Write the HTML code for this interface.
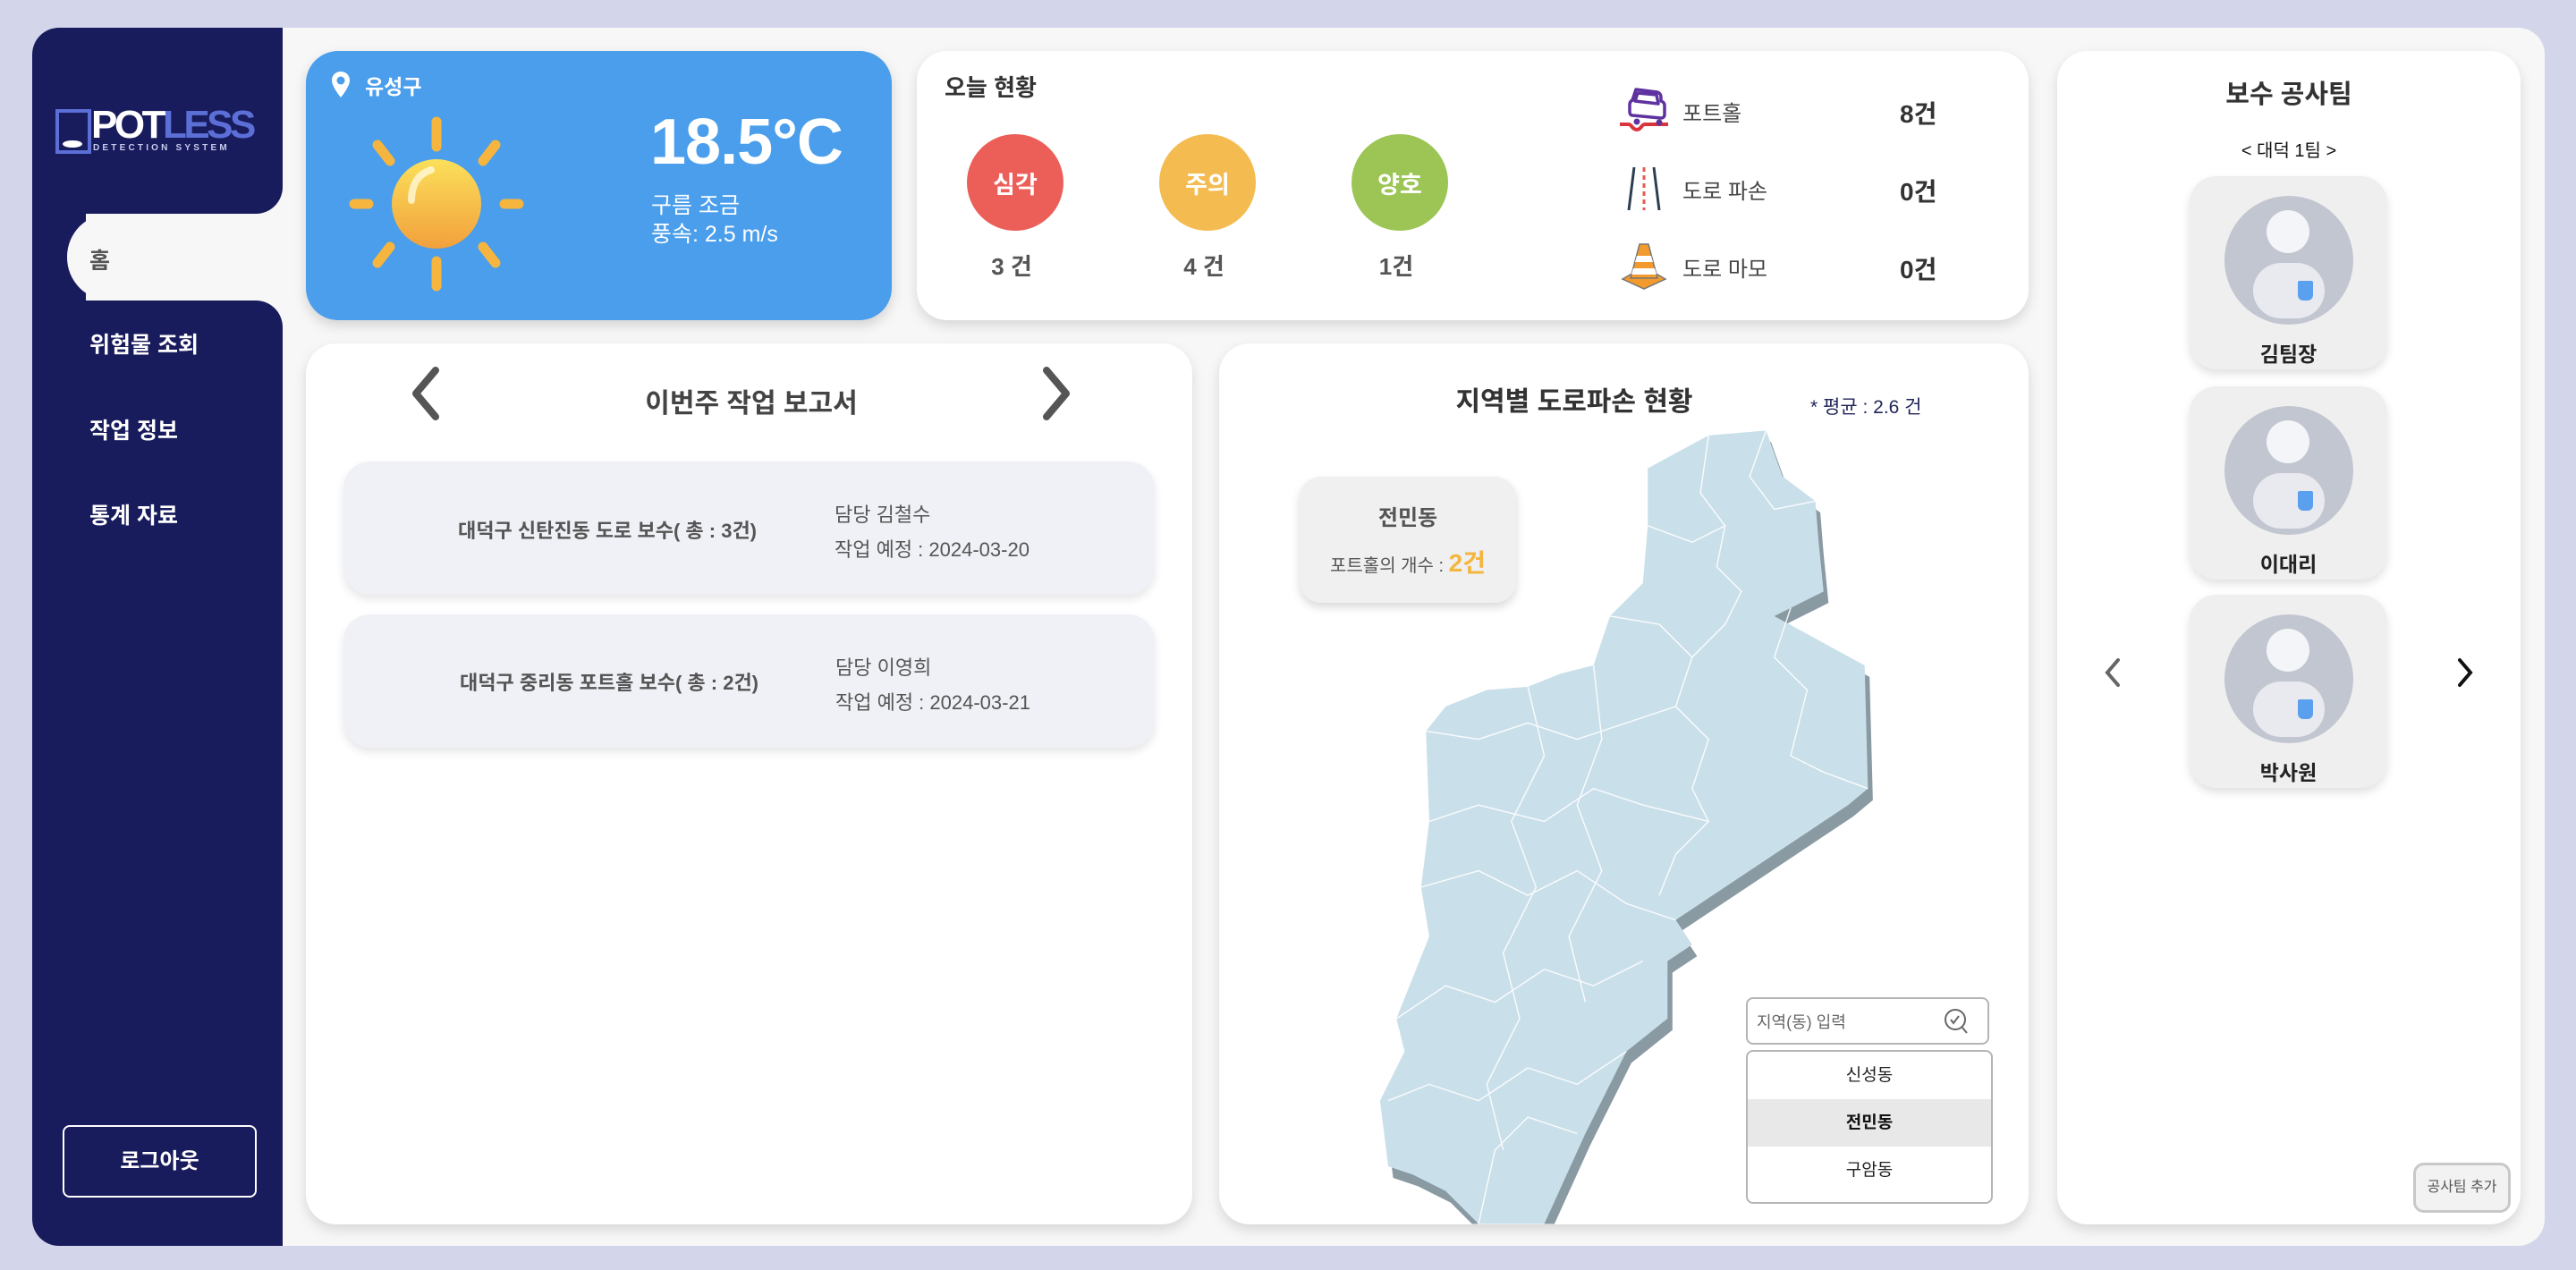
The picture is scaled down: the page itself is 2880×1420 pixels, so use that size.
<!DOCTYPE html>
<html><head><meta charset="utf-8"><style>
*{margin:0;padding:0;box-sizing:border-box}
body{width:2880px;height:1420px;background:#d3d5ea;font-family:"Liberation Sans","Noto Sans CJK KR",sans-serif;position:relative;overflow:hidden;color:#444}
.a{position:absolute}
.frame{left:36px;top:31px;width:2809px;height:1362px;background:#f7f7f7;border-radius:30px;overflow:hidden}
.nav{background:#181b5c}
.card{background:#fff;border-radius:34px;box-shadow:0 6px 14px rgba(0,0,0,.13)}
.nt{color:#fff;font-weight:bold;font-size:25px;left:100px}
.c{text-align:center}
.circ{width:108px;height:108px;border-radius:50%;color:#fff;font-weight:bold;font-size:27px;display:flex;align-items:center;justify-content:center}
.cnt{font-weight:bold;font-size:26px;color:#555;width:108px;text-align:center}
.lbl{font-size:24px;color:#444}
.num{font-weight:bold;font-size:28px;color:#333}
.item{background:#f0f1f6;border-radius:30px;box-shadow:0 5px 10px rgba(0,0,0,.1);width:907px;height:149px}
.mem{background:#efefef;border-radius:30px;box-shadow:0 5px 10px rgba(0,0,0,.12);width:221px;height:216px}
.av{left:39px;top:22px;width:144px;height:144px;border-radius:50%;background:#c2c6d1;overflow:hidden}
.name{left:0;width:221px;top:180px;text-align:center;font-weight:bold;font-size:23px;color:#222}
</style></head><body>
<div class="a frame"></div>
<!-- sidebar -->
<div class="a nav" style="left:36px;top:31px;width:280px;height:208px;border-radius:30px 0 30px 0"></div>
<div class="a nav" style="left:36px;top:239px;width:60px;height:97px"></div>
<div class="a nav" style="left:36px;top:336px;width:280px;height:1057px;border-radius:0 30px 0 30px"></div>
<div class="a" style="left:75px;top:239px;width:245px;height:97px;background:#f7f7f7;border-radius:48px 0 0 48px"></div>
<!-- logo -->
<div class="a" style="left:62px;top:122px;width:40px;height:50px;border:4px solid #5b6fd6"></div>
<div class="a" style="left:70px;top:157px;width:22px;height:8px;border-radius:50%;background:#fff"></div>
<div class="a" style="left:102px;top:116px;font-size:44px;font-weight:bold;letter-spacing:-3.5px;line-height:48px"><span style="color:#fff">POT</span><span style="color:#5b6fd6">LESS</span></div>
<div class="a" style="left:104px;top:160px;font-size:10px;color:#c8ccee;letter-spacing:3.2px;font-weight:bold">DETECTION SYSTEM</div>
<div class="a" style="left:100px;top:272px;font-size:25px;font-weight:bold;color:#555">홈</div>
<div class="a nt" style="top:366px">위험물 조회</div>
<div class="a nt" style="top:462px">작업 정보</div>
<div class="a nt" style="top:557px">통계 자료</div>
<div class="a c" style="left:70px;top:1258px;width:217px;height:81px;border:2px solid #fff;border-radius:8px;color:#fff;font-weight:bold;font-size:24px;line-height:77px">로그아웃</div>

<!-- weather -->
<div class="a" style="left:342px;top:57px;width:655px;height:301px;background:#4a9eeb;border-radius:36px;box-shadow:0 6px 14px rgba(0,0,0,.15)"></div>
<svg class="a" style="left:368px;top:78px" width="26" height="34" viewBox="0 0 26 34"><path d="M13 2C7 2 3 6.5 3 12c0 7 10 19 10 19s10-12 10-19C23 6.5 19 2 13 2z" fill="#fff"/><circle cx="13" cy="12" r="4.5" fill="#4a9eeb"/></svg>
<div class="a" style="left:408px;top:78px;color:#fff;font-weight:bold;font-size:23px">유성구</div>
<svg class="a" style="left:388px;top:128px" width="200" height="200" viewBox="0 0 200 200">
<defs><linearGradient id="sg" x1="0" y1="0" x2="0" y2="1"><stop offset="0" stop-color="#fbe05a"/><stop offset="1" stop-color="#f2a03c"/></linearGradient></defs>
<g stroke="#f5b53f" stroke-width="11" stroke-linecap="round">
<line x1="100" y1="8" x2="100" y2="36"/><line x1="100" y1="164" x2="100" y2="192"/>
<line x1="8" y1="100" x2="24" y2="100"/><line x1="176" y1="100" x2="192" y2="100"/>
<line x1="34" y1="34" x2="48" y2="52"/><line x1="166" y1="34" x2="152" y2="52"/>
<line x1="34" y1="166" x2="48" y2="148"/><line x1="166" y1="166" x2="152" y2="148"/></g>
<circle cx="100" cy="100" r="50" fill="url(#sg)"/>
<path d="M72 96c0-18 8-30 22-34" stroke="#fff9d8" stroke-width="8" fill="none" stroke-linecap="round" opacity=".8"/>
</svg>
<div class="a" style="left:727px;top:118px;color:#fff;font-weight:bold;font-size:72px;letter-spacing:-1px">18.5°C</div>
<div class="a" style="left:728px;top:214px;color:#fff;font-size:25px;line-height:32px">구름 조금<br>풍속: 2.5 m/s</div>

<!-- today -->
<div class="a card" style="left:1025px;top:57px;width:1243px;height:301px"></div>
<div class="a" style="left:1056px;top:78px;font-weight:bold;font-size:26px;color:#333">오늘 현황</div>
<div class="a circ" style="left:1081px;top:150px;background:#ec5f59">심각</div>
<div class="a circ" style="left:1296px;top:150px;background:#f4bb50">주의</div>
<div class="a circ" style="left:1511px;top:150px;background:#9cc556">양호</div>
<div class="a cnt" style="left:1077px;top:278px">3 건</div>
<div class="a cnt" style="left:1292px;top:278px">4 건</div>
<div class="a cnt" style="left:1507px;top:278px">1건</div>
<svg class="a" style="left:1809px;top:95px" width="58" height="55" viewBox="0 0 58 55"><path d="M2 44h10c3 0 4 6 9 6s5-6 9-6h26" stroke="#d9343c" stroke-width="4" fill="none"/><path d="M20 5l24 3c3 1 4 3 4 6v4c3 1 4 3 4 5v10c0 3-2 4-4 4l-32-3c-2 0-3-2-3-4V22c0-2 1-4 3-5z M22 9l-3 9 26 3 -2-10z" fill="none" stroke="#5e33a0" stroke-width="3.5" stroke-linejoin="round"/><circle cx="21" cy="41" r="3.5" fill="#5e33a0"/><circle cx="46" cy="42" r="3.5" fill="#5e33a0"/></svg>
<svg class="a" style="left:1817px;top:185px" width="42" height="52" viewBox="0 0 42 52"><path d="M10 2L4 50M32 2l6 48" stroke="#2d3e50" stroke-width="3"/><path d="M21 2v48" stroke="#e8594f" stroke-width="3" stroke-dasharray="5 4"/></svg>
<svg class="a" style="left:1809px;top:270px" width="58" height="55" viewBox="0 0 58 55"><path d="M5 42l14-8h20l14 8-24 11z" fill="#f29a2e" stroke="#777" stroke-width="1.5"/><path d="M24 3h10l10 38H14z" fill="#f29a2e" stroke="#777" stroke-width="1.5"/><path d="M21 16h16l2 7H19zM17 30h24l2 7H15z" fill="#fff"/></svg>
<div class="a lbl" style="left:1881px;top:107px">포트홀</div>
<div class="a lbl" style="left:1881px;top:194px">도로 파손</div>
<div class="a lbl" style="left:1881px;top:281px">도로 마모</div>
<div class="a num" style="left:2124px;top:106px">8건</div>
<div class="a num" style="left:2124px;top:193px">0건</div>
<div class="a num" style="left:2124px;top:280px">0건</div>

<!-- report -->
<div class="a card" style="left:342px;top:384px;width:991px;height:985px"></div>
<svg class="a" style="left:455px;top:410px" width="40" height="60" viewBox="0 0 40 60"><path d="M32 4L10 30l22 26" stroke="#555" stroke-width="8" fill="none" stroke-linecap="round" stroke-linejoin="round"/></svg>
<svg class="a" style="left:1162px;top:410px" width="40" height="60" viewBox="0 0 40 60"><path d="M8 4l22 26L8 56" stroke="#555" stroke-width="8" fill="none" stroke-linecap="round" stroke-linejoin="round"/></svg>
<div class="a c" style="left:600px;top:426px;width:480px;font-weight:bold;font-size:30px;color:#444">이번주 작업 보고서</div>
<div class="a item" style="left:384px;top:516px"></div>
<div class="a item" style="left:384px;top:687px"></div>
<div class="a" style="left:512px;top:576px;font-weight:bold;font-size:22px;color:#555">대덕구 신탄진동 도로 보수( 총 : 3건)</div>
<div class="a" style="left:933px;top:556px;font-size:22px;color:#555;line-height:39px">담당 김철수<br>작업 예정 : 2024-03-20</div>
<div class="a" style="left:514px;top:746px;font-weight:bold;font-size:22px;color:#555">대덕구 중리동 포트홀 보수( 총 : 2건)</div>
<div class="a" style="left:934px;top:727px;font-size:22px;color:#555;line-height:39px">담당 이영희<br>작업 예정 : 2024-03-21</div>

<!-- map card -->
<div class="a card" style="left:1363px;top:384px;width:905px;height:985px"></div>
<div class="a c" style="left:1560px;top:424px;width:400px;font-weight:bold;font-size:30px;color:#333">지역별 도로파손 현황</div>
<div class="a" style="left:2024px;top:439px;font-size:21px;color:#22265a">* 평균 : 2.6 건</div>
<svg class="a" style="left:0;top:0" width="2880" height="1420" viewBox="0 0 1568 773">
<defs><clipPath id="cp"><rect x="742" y="209" width="493" height="536"/></clipPath></defs>
<g clip-path="url(#cp)">
<g transform="translate(3,7)"><path d="M1003 285L1040 265L1075 262L1085 290L1105 305L1107 330L1110 360L1090 370L1080 375L1135 405L1137 480L1125 490L1020 560L1030 575L1015 585L1015 620L990 640L965 690L940 745L900 745L880 725L860 715L845 710L840 670L855 640L850 620L870 570L865 540L870 500L868 445L880 430L905 420L930 418L950 410L970 405L980 375L1000 355L1003 320Z" fill="#8a9aa2"/></g>
<path d="M1003 285L1040 265L1075 262L1085 290L1105 305L1107 330L1110 360L1090 370L1080 375L1135 405L1137 480L1125 490L1020 560L1030 575L1015 585L1015 620L990 640L965 690L940 745L900 745L880 725L860 715L845 710L840 670L855 640L850 620L870 570L865 540L870 500L868 445L880 430L905 420L930 418L950 410L970 405L980 375L1000 355L1003 320Z" fill="#c9dfea"/>
<g stroke="#fff" stroke-width=".8" fill="none" opacity=".9">
<path d="M1040 265L1035 300L1050 320L1045 345L1060 360L1050 380L1030 400L1020 430L1040 450L1030 480L1040 500L1020 520L1010 545"/>
<path d="M1075 262L1065 290L1080 310L1105 305"/><path d="M1003 320L1030 330L1050 320"/>
<path d="M980 375L1010 380L1030 400"/><path d="M1090 370L1080 400L1100 420L1090 460L1110 470L1137 480"/>
<path d="M868 445L900 450L930 440L960 450L990 440L1020 430"/><path d="M870 500L900 490L940 500L970 480L1000 490L1040 500"/>
<path d="M865 540L900 530L930 545L960 530L990 550L1020 560"/><path d="M850 620L880 600L910 610L940 590L970 600L1000 585"/>
<path d="M845 670L870 660L900 670L930 650L960 660L990 640"/><path d="M900 745L910 700L930 680L960 690"/>
<path d="M930 418L940 460L920 500L935 540L915 580L925 620L905 660L915 700"/><path d="M970 405L975 450L960 490L975 530L955 570L965 610"/>
</g></g>
</svg>
<div class="a c" style="left:1453px;top:533px;width:242px;height:141px;background:#f0f0f0;border-radius:24px;box-shadow:0 5px 10px rgba(0,0,0,.15)">
<div style="margin-top:26px;font-weight:bold;font-size:24px;color:#555">전민동</div>
<div style="margin-top:14px;font-size:20px;color:#555">포트홀의 개수 : <span style="color:#f4b63f;font-weight:bold;font-size:28px">2건</span></div></div>
<div class="a" style="left:1952px;top:1115px;width:272px;height:53px;border:2px solid #b5b5b5;border-radius:8px;background:#fff"></div>
<div class="a" style="left:1964px;top:1129px;font-size:18px;color:#666">지역(동) 입력</div>
<svg class="a" style="left:2172px;top:1126px" width="30" height="32" viewBox="0 0 30 32"><circle cx="14" cy="14" r="11" fill="none" stroke="#666" stroke-width="2"/><path d="M22 23l5 6M9 14l3 4 6-8" stroke="#666" stroke-width="2" fill="none"/></svg>
<div class="a" style="left:1952px;top:1174px;width:276px;height:172px;border:2px solid #b5b5b5;border-radius:8px;background:#fff;overflow:hidden">
<div class="c" style="height:53px;line-height:53px;font-size:19px;color:#222;margin-top:0">신성동</div>
<div class="c" style="height:53px;line-height:53px;font-size:19px;color:#111;font-weight:bold;background:#e8e8e8">전민동</div>
<div class="c" style="height:53px;line-height:53px;font-size:19px;color:#222">구암동</div></div>

<!-- team -->
<div class="a card" style="left:2300px;top:57px;width:518px;height:1312px"></div>
<div class="a c" style="left:2300px;top:82px;width:518px;font-weight:bold;font-size:29px;color:#333">보수 공사팀</div>
<div class="a c" style="left:2300px;top:152px;width:518px;font-size:20px;color:#111">&lt; 대덕 1팀 &gt;</div>
<div class="a mem" style="left:2448px;top:197px"><div class="a av"><div class="a" style="left:47px;top:16px;width:48px;height:48px;border-radius:50%;background:#f4f5f8"></div><div class="a" style="left:32px;top:75px;width:80px;height:62px;border-radius:40px;background:#e8eaef"></div><div class="a" style="left:82px;top:95px;width:17px;height:22px;background:#5aa0ef;border-radius:2px 2px 6px 6px"></div></div><div class="a name">김팀장</div></div>
<div class="a mem" style="left:2448px;top:432px"><div class="a av"><div class="a" style="left:47px;top:16px;width:48px;height:48px;border-radius:50%;background:#f4f5f8"></div><div class="a" style="left:32px;top:75px;width:80px;height:62px;border-radius:40px;background:#e8eaef"></div><div class="a" style="left:82px;top:95px;width:17px;height:22px;background:#5aa0ef;border-radius:2px 2px 6px 6px"></div></div><div class="a name">이대리</div></div>
<div class="a mem" style="left:2448px;top:665px"><div class="a av"><div class="a" style="left:47px;top:16px;width:48px;height:48px;border-radius:50%;background:#f4f5f8"></div><div class="a" style="left:32px;top:75px;width:80px;height:62px;border-radius:40px;background:#e8eaef"></div><div class="a" style="left:82px;top:95px;width:17px;height:22px;background:#5aa0ef;border-radius:2px 2px 6px 6px"></div></div><div class="a name">박사원</div></div>
<svg class="a" style="left:2350px;top:734px" width="24" height="36" viewBox="0 0 24 36"><path d="M18 4L6 18l12 14" stroke="#666" stroke-width="4" fill="none" stroke-linecap="round"/></svg>
<svg class="a" style="left:2744px;top:734px" width="24" height="36" viewBox="0 0 24 36"><path d="M6 4l12 14L6 32" stroke="#111" stroke-width="4" fill="none" stroke-linecap="round"/></svg>
<div class="a c" style="left:2698px;top:1300px;width:109px;height:56px;border:3px solid #c8c8c8;border-radius:12px;background:#f2f2f2;font-size:16px;line-height:50px;color:#555">공사팀 추가</div>
</body></html>
